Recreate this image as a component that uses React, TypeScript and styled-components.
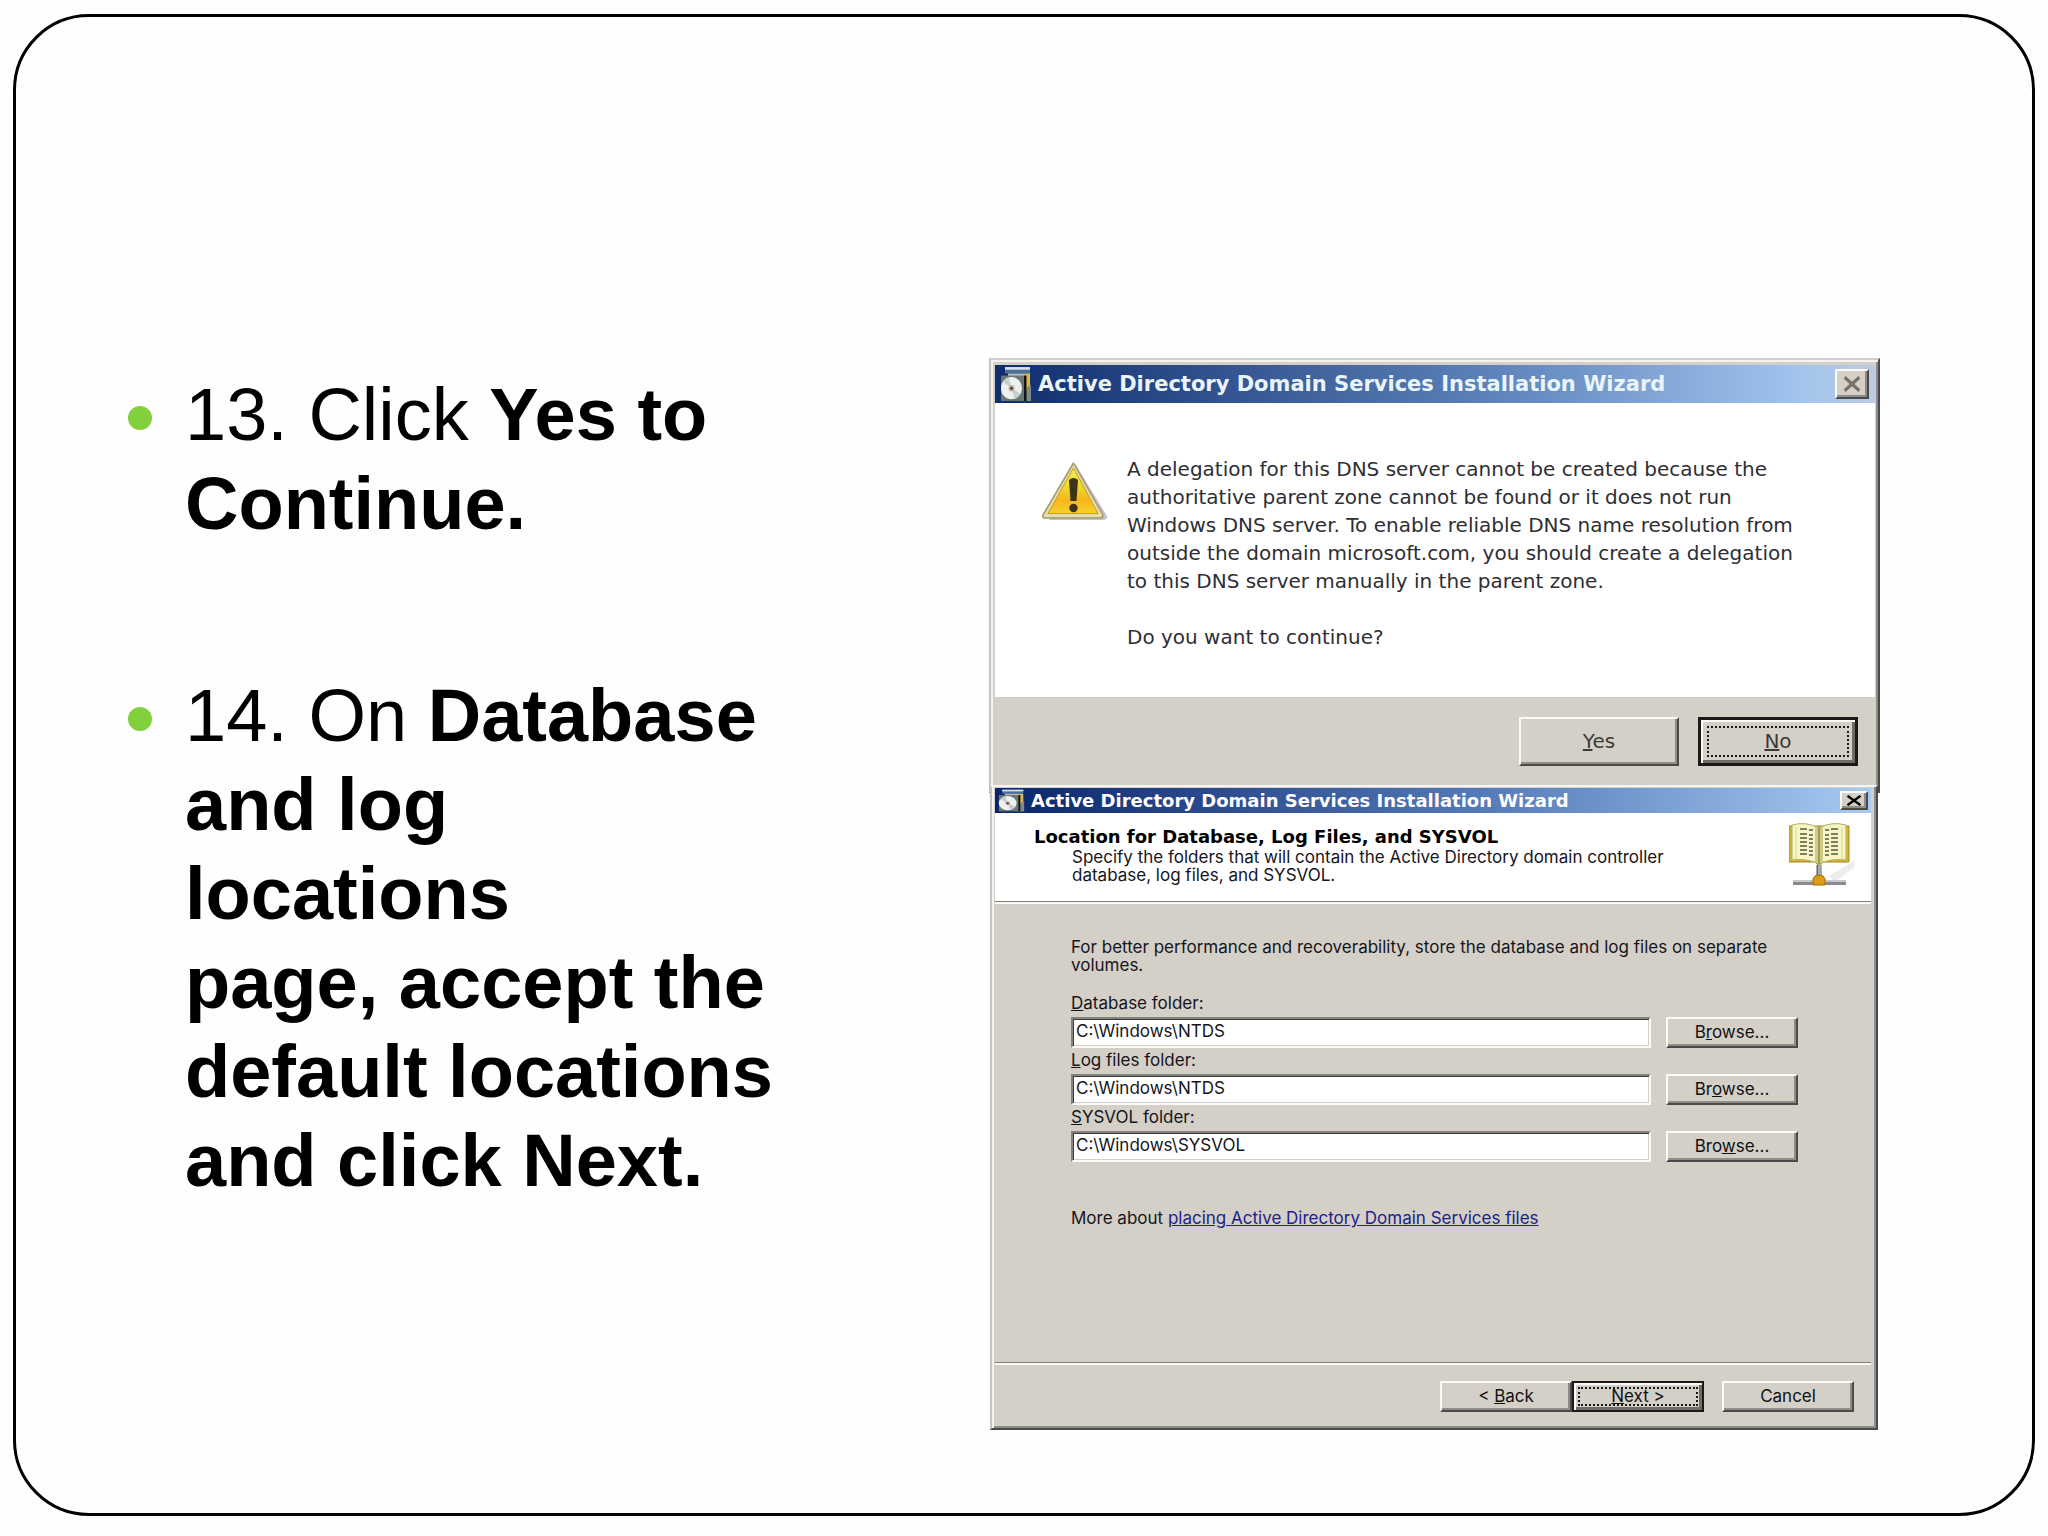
import React from "react";
import styled, { createGlobalStyle, css } from "styled-components";

const face = "#d4d0c8";
const uiFont = `"DejaVu Sans", Tahoma, Verdana, sans-serif`;
const formFont = `Inter, "Liberation Sans", Arial, sans-serif`;

const GlobalStyle = createGlobalStyle`
  *, *::before, *::after { box-sizing: border-box; }
  body { margin: 0; background: #fefefe; color: #000; }
`;

const Page = styled.div`
  display: flex;
  min-height: 100vh;
  padding: 14px 13px 20px 13px;
`;

const Slide = styled.main`
  flex: 1;
  display: flex;
  align-items: flex-start;
  justify-content: space-between;
  gap: 32px;
  padding: 341px 152px 80px 112px;
  border: 3px solid #000;
  border-radius: 76px;
`;

const Steps = styled.ul`
  flex: 0 1 668px;
  display: flex;
  flex-direction: column;
  gap: 123px;
  margin: 0;
  padding: 12px 0 0;
  list-style: none;
  font: 74px/89px "Liberation Sans", Arial, sans-serif;
`;

const Step = styled.li`
  display: flex;
  align-items: flex-start;
  gap: 33px;

  &::before {
    content: "";
    flex: none;
    width: 24px;
    height: 24px;
    margin-top: 36px;
    border-radius: 50%;
    background: #82d13c;
  }
`;

const StepText = styled.p`
  margin: 0;
`;

const Screens = styled.div`
  flex: 0 0 891px;
  display: flex;
  flex-direction: column;
  font-family: ${uiFont};
`;

const Window = styled.section`
  display: flex;
  flex-direction: column;
  background: ${face};
  border: 2px solid;
  border-color: #cfcdc9 #4a4a4a #4a4a4a #c4c4c4;
`;

const AlertWindow = styled(Window)`
  padding: 5px 3px 3px 4px;
  box-shadow: inset 2px 2px #f4f3f0, inset -2px -2px #8c8c8c;
`;

const WizardWindow = styled(Window)`
  position: relative;
  margin: -8px 2px 0 1px;
  padding: 1px 5px 3px 3px;
  border-top-color: #f6f5f2;
  box-shadow: inset 2px 0 #f4f3f0, inset -2px -2px #8c8c8c;
`;

const TitleBar = styled.header<{ $large?: boolean }>`
  display: flex;
  align-items: center;
  gap: 6px;
  height: ${(p) => (p.$large ? "38px" : "25px")};
  padding: ${(p) => (p.$large ? "0 6px 0 5px" : "0 3px")};
  background: ${(p) =>
    p.$large
      ? "linear-gradient(90deg, #0f2c6c, #5a80b8 55%, #a3c5ee 92%, #bccbe0)"
      : "linear-gradient(90deg, #0a246a, #5479b8 55%, #a6caf0)"};
`;

const WindowTitle = styled.h2<{ $large?: boolean }>`
  flex: 1;
  margin: 0;
  color: ${(p) => (p.$large ? "#e9f5fb" : "#fff")};
  font-size: ${(p) => (p.$large ? "21px" : "18px")};
  line-height: 24px;
  font-weight: 700;
  white-space: nowrap;
`;

const raised = css`
  border: 2px solid;
  border-color: #fbfaf8 #4a4a48 #4a4a48 #fbfaf8;
  box-shadow: inset -2px -2px #908d88;
`;

const CloseButton = styled.button<{ $large?: boolean }>`
  display: grid;
  place-items: center;
  width: ${(p) => (p.$large ? "34px" : "28px")};
  height: ${(p) => (p.$large ? "30px" : "19px")};
  padding: 0;
  color: ${(p) => (p.$large ? "#77705f" : "#000")};
  background: ${face};
  ${raised}
`;

const PushButton = styled.button<{ $large?: boolean; $default?: boolean }>`
  width: ${(p) => (p.$large ? "160px" : "132px")};
  height: ${(p) => (p.$large ? "49px" : "31px")};
  padding: 0 0 2px;
  color: ${(p) => (p.$large ? "#3c3a38" : "#111")};
  background: ${face};
  font-family: ${(p) => (p.$large ? uiFont : formFont)};
  font-size: ${(p) => (p.$large ? "20px" : "17px")};
  line-height: 20px;
  ${raised}
  ${(p) =>
    p.$default &&
    css`
      border: ${p.$large ? "3px" : "2px"} solid #1c1a18;
      box-shadow: inset 2px 2px #fbfaf8, inset -3px -3px #6f6c68;
      outline: 2px dotted #1c1a18;
      outline-offset: ${p.$large ? "-11px" : "-8px"};
    `}
`;

const AlertBody = styled.div`
  display: flex;
  align-items: flex-start;
  gap: 20px;
  height: 294px;
  padding: 52px 20px 0 46px;
  background: #fff;
  color: #2e2e34;
  font-size: 20px;
  line-height: 28px;
`;

const AlertText = styled.p`
  margin: 0;
  white-space: nowrap;
`;

const AlertActions = styled.footer`
  display: flex;
  justify-content: flex-end;
  gap: 19px;
  padding: 20px 17px 22px;
`;

const WizardHeader = styled.div`
  display: flex;
  justify-content: space-between;
  align-items: flex-start;
  height: 88px;
  padding: 1px 16px 0 39px;
  background: #fff;
`;

const HeaderText = styled.div`
  padding-top: 12px;
`;

const PageTitle = styled.h3`
  margin: 0;
  font-size: 18px;
  line-height: 22px;
  font-weight: 700;
`;

const Note = styled.p<{ $indent?: boolean }>`
  margin: 0;
  padding-left: ${(p) => (p.$indent ? "38px" : "0")};
  color: #15151c;
  font-family: ${formFont};
  font-size: 17px;
  line-height: 18px;
  white-space: nowrap;
`;

const Divider = styled.hr`
  width: 100%;
  height: 3px;
  margin: 0;
  border: 0;
  border-top: 1px solid #7c7b78;
  background: #fbfaf6;
`;

const WizardBody = styled.form`
  display: flex;
  flex-direction: column;
  min-height: 458px;
  padding: 34px 73px 20px 76px;
`;

const Folders = styled.div`
  display: grid;
  grid-template-columns: 1fr auto;
  column-gap: 15px;
  padding: 17px 0 47px;
`;

const FolderLabel = styled.label`
  grid-column: 1 / -1;
  padding-bottom: 2px;
  color: #15151c;
  font-family: ${formFont};
  font-size: 17px;
  line-height: 24px;
`;

const FolderInput = styled.input`
  min-width: 0;
  height: 31px;
  padding: 0 4px 3px 3px;
  border: 2px solid;
  border-color: #84827e #fbfaf6 #fbfaf6 #84827e;
  border-radius: 0;
  background: #fff;
  box-shadow: inset 1px 1px #3c3c3c, inset -1px -1px ${face};
  color: #15151c;
  font-family: ${formFont};
  font-size: 17px;
`;

const HelpLink = styled.a`
  color: #20208c;
`;

const WizardActions = styled.footer`
  display: flex;
  justify-content: flex-end;
  padding: 16px 17px 13px;
`;

const CancelSlot = styled.div`
  display: flex;
  padding-left: 18px;
`;

const Cross = ({ large }: { large?: boolean }) => (
  <svg width={large ? 18 : 16} height={large ? 16 : 11} viewBox="0 0 16 12" preserveAspectRatio="none" aria-hidden="true">
    <path d="M1.500 1L14.500 11M14.500 1L1.500 11" stroke="currentColor" strokeWidth="2.600" fill="none" />
  </svg>
);

const InstallerIcon = ({ w, h }: { w: number; h: number }) => (
  <svg width={w} height={h} viewBox="0 0 32 34" preserveAspectRatio="none" aria-hidden="true">
    <rect x="5" y="1" width="25" height="6" fill="#4c6f9c" />
    <rect x="5" y="1" width="25" height="2.500" fill="#d6e0ea" />
    <path d="M8 7h22v26h-8V10H8z" fill="#b9bdb8" />
    <path d="M24 8l5-1v14l-4 3z" fill="#e3b33c" />
    <path d="M27 20l4-2v15h-7z" fill="#7f8a80" />
    <rect x="1" y="9" width="23" height="24" fill="#6c7675" />
    <path d="M24 9h2.500v24H24z" fill="#10151c" />
    <ellipse cx="11.500" cy="21" rx="10.500" ry="10.500" fill="#eef1f0" />
    <path d="M11.500 21L3 15a10 10 0 0 1 6-4zM11.500 21l9 5a10 10 0 0 1-6 5z" fill="#c4cfd0" />
    <circle cx="11.500" cy="21" r="3" fill="#b9b6a4" />
    <circle cx="11.500" cy="21" r="1.500" fill="#5b3526" />
  </svg>
);

const WarningIcon = () => (
  <svg width="66" height="66" viewBox="0 0 66 66" aria-hidden="true">
    <defs>
      <linearGradient id="warn" x1="0" y1="0" x2="0" y2="1">
        <stop offset="0" stopColor="#f4ee58" />
        <stop offset="0.450" stopColor="#eed827" />
        <stop offset="0.700" stopColor="#f8b41c" />
        <stop offset="1" stopColor="#f6d22c" />
      </linearGradient>
    </defs>
    <path d="M35 10L66 61q1 3-3 4H8z" fill="#c9c0d0" />
    <path d="M32.500 8L62 60q0 3-3 3H4q-3 0-2-3z" fill="#e2dcae" stroke="#a39b62" strokeWidth="1.500" strokeLinejoin="round" />
    <path d="M32.500 13L57 58.500H7z" fill="url(#warn)" stroke="#c59c1c" strokeWidth="1" />
    <path d="M28 25q4.500-4 9 0l-1.500 21h-6z" fill="#3c3418" />
    <circle cx="32.500" cy="53" r="4.200" fill="#3c3418" />
  </svg>
);

const BookIcon = () => {
  const rows = [15, 20, 24, 28, 32, 36, 40];
  return (
    <svg width="66" height="74" viewBox="0 0 66 74" aria-hidden="true">
      <path d="M40 62L66 46q5 2-2 8L46 68z" fill="#ededf0" />
      <path d="M0 12h60v36H34l-4 4-4-4H0z" fill="#d2b736" stroke="#a28a22" strokeWidth="1" />
      <path d="M3 11q14-4 27 3v36q-12-6-27-4z" fill="#f6f5c8" stroke="#b9ad5a" strokeWidth="1" />
      <path d="M57 11q-14-4-27 3v36q12-6 27-4z" fill="#f6f5c8" stroke="#b9ad5a" strokeWidth="1" />
      <path d="M7 13v32M53 13v32" stroke="#dcd794" strokeWidth="1" />
      <path d="M26 12.500l4 2 4-2v35l-4 3-4-3z" fill="#cfcb86" />
      <path d="M30 14v36" stroke="#8f8a48" strokeWidth="1.500" />
      {rows.map((y) => (
        <path key={y} d={`M11 ${y}h7M20 ${y + 1}h4M36 ${y + 1}h4M42 ${y}h7`} stroke="#5c5a34" strokeWidth="1.500" />
      ))}
      <rect x="27" y="51" width="6" height="12" fill="#a9a9ad" />
      <path d="M28.500 51v12" stroke="#6b6b70" strokeWidth="1" />
      <rect x="4" y="66" width="53" height="5" fill="#8b8b8d" />
      <rect x="4" y="66" width="53" height="2" fill="#c8c8ca" />
      <path d="M24 71v-6q1-4 6-4t6 4v6z" fill="#dc9c14" stroke="#a26c0c" strokeWidth="1" />
    </svg>
  );
};

const folders = [
  { id: "database", label: <><u>D</u>atabase folder:</>, value: "C:\\Windows\\NTDS", browse: <>B<u>r</u>owse...</> },
  { id: "logs", label: <><u>L</u>og files folder:</>, value: "C:\\Windows\\NTDS", browse: <>Br<u>o</u>wse...</> },
  { id: "sysvol", label: <><u>S</u>YSVOL folder:</>, value: "C:\\Windows\\SYSVOL", browse: <>Bro<u>w</u>se...</> },
];

const title = "Active Directory Domain Services Installation Wizard";

export default function App() {
  return (
    <>
      <GlobalStyle />
      <Page>
        <Slide>
          <Steps>
            <Step>
              <StepText>
                13. Click <b>Yes to<br />Continue.</b>
              </StepText>
            </Step>
            <Step>
              <StepText>
                14. On <b>Database<br />and log<br />locations<br />page, accept the<br />default locations<br />and click Next.</b>
              </StepText>
            </Step>
          </Steps>

          <Screens>
            <AlertWindow>
              <TitleBar $large>
                <InstallerIcon w={32} h={36} />
                <WindowTitle $large>{title}</WindowTitle>
                <CloseButton type="button" aria-label="Close" $large>
                  <Cross large />
                </CloseButton>
              </TitleBar>
              <AlertBody>
                <WarningIcon />
                <AlertText>
                  A delegation for this DNS server cannot be created because the<br />
                  authoritative parent zone cannot be found or it does not run<br />
                  Windows DNS server. To enable reliable DNS name resolution from<br />
                  outside the domain microsoft.com, you should create a delegation<br />
                  to this DNS server manually in the parent zone.<br />
                  <br />
                  Do you want to continue?
                </AlertText>
              </AlertBody>
              <AlertActions>
                <PushButton type="button" $large><u>Y</u>es</PushButton>
                <PushButton type="button" $large $default><u>N</u>o</PushButton>
              </AlertActions>
            </AlertWindow>

            <WizardWindow>
              <TitleBar>
                <InstallerIcon w={27} h={23} />
                <WindowTitle>{title}</WindowTitle>
                <CloseButton type="button" aria-label="Close">
                  <Cross />
                </CloseButton>
              </TitleBar>
              <WizardHeader>
                <HeaderText>
                  <PageTitle>Location for Database, Log Files, and SYSVOL</PageTitle>
                  <Note $indent>
                    Specify the folders that will contain the Active Directory domain controller<br />
                    database, log files, and SYSVOL.
                  </Note>
                </HeaderText>
                <BookIcon />
              </WizardHeader>
              <Divider />
              <WizardBody>
                <Note>
                  For better performance and recoverability, store the database and log files on separate<br />
                  volumes.
                </Note>
                <Folders>
                  {folders.map((f) => (
                    <React.Fragment key={f.id}>
                      <FolderLabel htmlFor={f.id}>{f.label}</FolderLabel>
                      <FolderInput id={f.id} type="text" defaultValue={f.value} />
                      <PushButton type="button">{f.browse}</PushButton>
                    </React.Fragment>
                  ))}
                </Folders>
                <Note>
                  More about <HelpLink href="#files">placing Active Directory Domain Services files</HelpLink>
                </Note>
              </WizardBody>
              <Divider />
              <WizardActions>
                <PushButton type="button">&lt; <u>B</u>ack</PushButton>
                <PushButton type="button" $default><u>N</u>ext &gt;</PushButton>
                <CancelSlot>
                  <PushButton type="button">Cancel</PushButton>
                </CancelSlot>
              </WizardActions>
            </WizardWindow>
          </Screens>
        </Slide>
      </Page>
    </>
  );
}
